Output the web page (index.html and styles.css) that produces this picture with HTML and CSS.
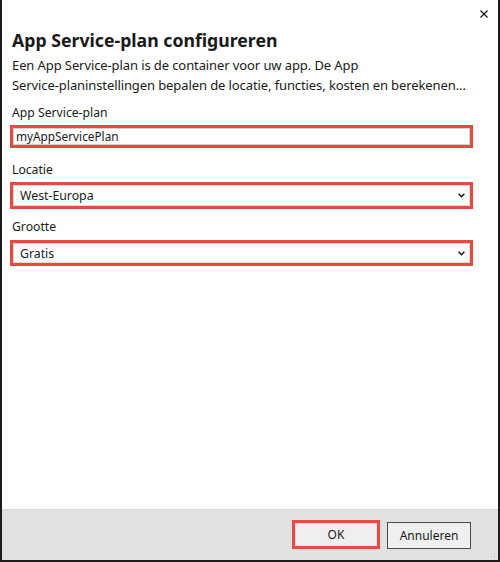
FILE: index.html
```html
<!DOCTYPE html>
<html>
<head>
<meta charset="utf-8">
<link rel="stylesheet" href="styles.css">
</head>
<body>
<div class="window">
  <div class="content">
    <div class="titlebar">
      <span class="close" aria-label="Sluiten">
        <svg width="8" height="8" viewBox="0 0 8 8"><path d="M0.5 0.5 L7.5 7.5 M7.5 0.5 L0.5 7.5" stroke="#1a1a1a" stroke-width="1.3" fill="none"/></svg>
      </span>
    </div>
    <h1 class="title">App Service-plan configureren</h1>
    <p class="desc">Een App Service-plan is de container voor uw app. De App <span class="nb">Service-planinstellingen</span> bepalen de locatie, functies, kosten en berekenen...</p>

    <div class="field f1">
      <div class="label">App Service-plan</div>
      <div class="hl hl-input"><div class="input">myAppServicePlan</div></div>
    </div>
    <div class="field f2">
      <div class="label">Locatie</div>
      <div class="hl hl-select"><div class="select"><span>West-Europa</span>
        <svg class="chev" width="7" height="5" viewBox="0 0 7 5"><path d="M0.6 0.8 L3.5 3.7 L6.4 0.8" stroke="#1a1a1a" stroke-width="1.6" fill="none"/></svg></div></div>
    </div>
    <div class="field f3">
      <div class="label">Grootte</div>
      <div class="hl hl-select2"><div class="select"><span>Gratis</span>
        <svg class="chev" width="7" height="5" viewBox="0 0 7 5"><path d="M0.6 0.8 L3.5 3.7 L6.4 0.8" stroke="#1a1a1a" stroke-width="1.6" fill="none"/></svg></div></div>
    </div>
  </div>
  <div class="footer">
    <div class="hl hl-btn"><div class="btn btn-ok">OK</div></div>
    <div class="btn btn-cancel">Annuleren</div>
    <span class="grip"></span>
  </div>
</div>
</body>
</html>
```
FILE: styles.css
```css
html, body {
  margin: 0;
  padding: 0;
  background: #ffffff;
}
body {
  font-family: "Noto Sans", "Open Sans", sans-serif;
  color: #1a1a1a;
}
.window {
  width: 500px;
  height: 562px;
  box-sizing: border-box;
  border-left: 2px solid #1c1c1c;
  border-right: 2px solid #1c1c1c;
  border-bottom: 2px solid #1c1c1c;
  display: flex;
  flex-direction: column;
  background: #fff;
}
.content {
  flex: 1;
  padding: 0 25px 0 8px;
}
.titlebar {
  height: 28px;
  display: flex;
  justify-content: flex-end;
  align-items: flex-start;
}
.close {
  margin-top: 10px;
  margin-right: -15px;
  display: flex;
}
.title {
  margin: 0;
  font-size: 17.7px;
  font-weight: 700;
  line-height: 24px;
  padding-left: 2px;
}
.desc {
  margin: 3px 0 0 0;
  font-size: 13px;
  line-height: 20px;
  padding-left: 2px;
  letter-spacing: -0.1px;
}
.nb {
  white-space: nowrap;
}
.f1 { margin-top: 9px; }
.f2 { margin-top: 13px; }
.f3 { margin-top: 9px; }
.label {
  font-size: 12.2px;
  line-height: 18px;
  padding-left: 2px;
}
.hl {
  border: 3px solid #e84a40;
}
.hl-input {
  margin-top: 3px;
}
.input {
  height: 15px;
  border: 1px solid #d0d0d0;
  font-size: 11.8px;
  line-height: 15px;
  padding-left: 2px;
}
.select {
  height: 19px;
  border: 1px solid #dcdcdc;
  display: flex;
  align-items: center;
  justify-content: space-between;
  font-size: 12.3px;
  padding: 0 4px 0 6px;
}
.hl-select {
  margin-top: 3px;
}
.hl-select2 {
  margin-top: 4px;
}
.hl-select2 .select {
  height: 18px;
}
.chev {
  display: block;
}
.footer {
  height: 50px;
  background: #e1e1e1;
  border-top: 1px solid #d8d8d8;
  display: flex;
  justify-content: flex-end;
  align-items: flex-start;
  padding-right: 27px;
  gap: 7px;
  position: relative;
}
.hl-btn {
  margin-top: 10px;
  width: 82px;
  height: 23px;
}
.btn {
  box-sizing: border-box;
  font-size: 12px;
  display: flex;
  align-items: center;
  justify-content: center;
  background: #efefef;
}
.btn-ok {
  height: 23px;
  border: 1px solid #e6e6e6;
}
.btn-cancel {
  margin-top: 12px;
  width: 84px;
  height: 27px;
  border: 1px solid #4a4a4a;
}
.grip {
  position: absolute;
  right: 1px;
  bottom: 1px;
  width: 10px;
  height: 10px;
  background-image: radial-gradient(circle, #b8b8b8 0.8px, transparent 1px);
  background-size: 3px 3px;
  clip-path: polygon(100% 0, 100% 100%, 0 100%);
}
```
